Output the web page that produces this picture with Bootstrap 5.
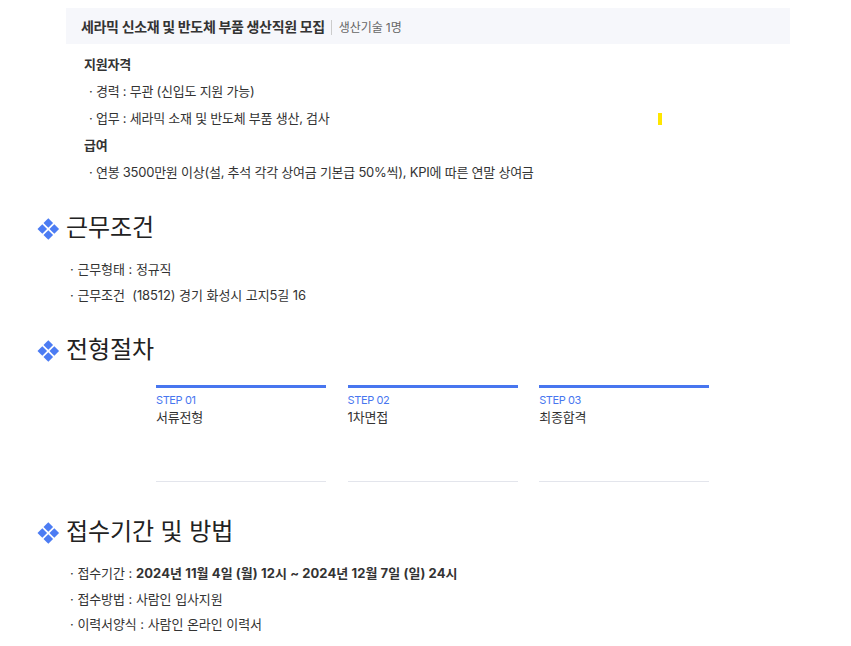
<!DOCTYPE html>
<html lang="ko">
<head>
<meta charset="utf-8">
<link href="https://cdn.jsdelivr.net/npm/bootstrap@5.3.0/dist/css/bootstrap.min.css" rel="stylesheet">
<style>
html,body{background:#fff}
body{font-family:Inter,"Noto Sans CJK KR","Noto Sans",sans-serif;color:#333;font-size:13px;letter-spacing:-.2px;width:851px;height:646px;overflow:hidden}
.page-wrap{padding:8px 61px 0 36px}
.job-head{margin-left:30px;height:36px;background:#f6f7fb;padding:2px 15px 0;display:flex;align-items:center}
.job-title{font-size:14px;font-weight:700;color:#333;line-height:20px;margin:0;letter-spacing:-.33px}
.job-sub{font-size:12px;color:#666;margin-left:6px;padding-left:7px;border-left:1px solid #ccc;line-height:15px;letter-spacing:-.1px}
.req-body{margin:6px 0 0 48px}
.req-line{height:27px;line-height:27px;margin:0;display:flex;align-items:center}
.req-line:first-child{height:28px}
.req-line.strong-line{font-weight:700;color:#333}
.req-line.item{padding-left:5px;letter-spacing:-.24px}
.yellow-mark{width:4px;height:12px;background:#ffe600;margin-left:auto;margin-right:128px}
.sec-head{display:flex;align-items:center;gap:6px;font-size:24px;font-weight:400;color:#222;margin:0;line-height:36px;letter-spacing:-.1px}
.sec-head svg{flex:none;margin-top:2px}
.s1{margin-top:24px}
.s2{margin-top:24px}
.s3{margin-top:32px}
.info-list{margin:11px 0 0 34px;padding:0;list-style:none;letter-spacing:-.14px;word-spacing:.3px}
.info-list li{height:25.5px;line-height:25.5px;white-space:pre}
.info-list b{letter-spacing:.08px;word-spacing:0;color:#333}
.steps{margin:17px 0 0 120px;display:flex;gap:21.6px}
.step-box{width:170px;height:97px;border-top:3px solid #4876ef;border-bottom:1px solid #e3e5ec;padding-top:4px}
.step-no{font-size:11px;color:#4876ef;line-height:17px;font-weight:400;letter-spacing:-.4px}
.step-name{font-size:13px;line-height:17px;color:#333}
</style>
</head>
<body>
<div class="page-wrap">
  <div class="job-head"><h2 class="job-title">세라믹 신소재 및 반도체 부품 생산직원 모집</h2><span class="job-sub">생산기술 1명</span></div>
  <div class="req-body">
    <p class="req-line strong-line">지원자격</p>
    <p class="req-line item">· 경력 : 무관 (신입도 지원 가능)</p>
    <p class="req-line item"><span>· 업무 : 세라믹 소재 및 반도체 부품 생산, 검사</span><span class="yellow-mark"></span></p>
    <p class="req-line strong-line">급여</p>
    <p class="req-line item">· 연봉 3500만원 이상(설, 추석 각각 상여금 기본급 50%씩), KPI에 따른 연말 상여금</p>
  </div>

  <h3 class="sec-head s1"><svg width="24" height="24" viewBox="0 0 24 24" aria-hidden="true"><g fill="#4c7cf3"><path d="M12.300 1.200l4.800 4.800-4.800 4.800-4.800-4.800z"/><path d="M6.300 7.200l4.800 4.800-4.800 4.800-4.800-4.800z"/><path d="M18.300 7.200l4.800 4.800-4.800 4.800-4.800-4.800z"/><path d="M12.300 13.200l4.800 4.800-4.800 4.800-4.800-4.800z"/></g></svg>근무조건</h3>
  <ul class="info-list">
    <li>· 근무형태 : 정규직</li>
    <li>· 근무조건  (18512) 경기 화성시 고지5길 16</li>
  </ul>

  <h3 class="sec-head s2"><svg width="24" height="24" viewBox="0 0 24 24" aria-hidden="true"><g fill="#4c7cf3"><path d="M12.300 1.200l4.800 4.800-4.800 4.800-4.800-4.800z"/><path d="M6.300 7.200l4.800 4.800-4.800 4.800-4.800-4.800z"/><path d="M18.300 7.200l4.800 4.800-4.800 4.800-4.800-4.800z"/><path d="M12.300 13.200l4.800 4.800-4.800 4.800-4.800-4.800z"/></g></svg>전형절차</h3>
  <div class="steps">
    <div class="step-box"><div class="step-no">STEP 01</div><div class="step-name">서류전형</div></div>
    <div class="step-box"><div class="step-no">STEP 02</div><div class="step-name">1차면접</div></div>
    <div class="step-box"><div class="step-no">STEP 03</div><div class="step-name">최종합격</div></div>
  </div>

  <h3 class="sec-head s3"><svg width="24" height="24" viewBox="0 0 24 24" aria-hidden="true"><g fill="#4c7cf3"><path d="M12.300 1.200l4.800 4.800-4.800 4.800-4.800-4.800z"/><path d="M6.300 7.200l4.800 4.800-4.800 4.800-4.800-4.800z"/><path d="M18.300 7.200l4.800 4.800-4.800 4.800-4.800-4.800z"/><path d="M12.300 13.200l4.800 4.800-4.800 4.800-4.800-4.800z"/></g></svg>접수기간 및 방법</h3>
  <ul class="info-list">
    <li>· 접수기간 : <b>2024년 11월 4일 (월) 12시 ~ 2024년 12월 7일 (일) 24시</b></li>
    <li>· 접수방법 : 사람인 입사지원</li>
    <li>· 이력서양식 : 사람인 온라인 이력서</li>
  </ul>
</div>
<script src="https://cdn.jsdelivr.net/npm/bootstrap@5.3.0/dist/js/bootstrap.bundle.min.js"></script>
</body>
</html>
